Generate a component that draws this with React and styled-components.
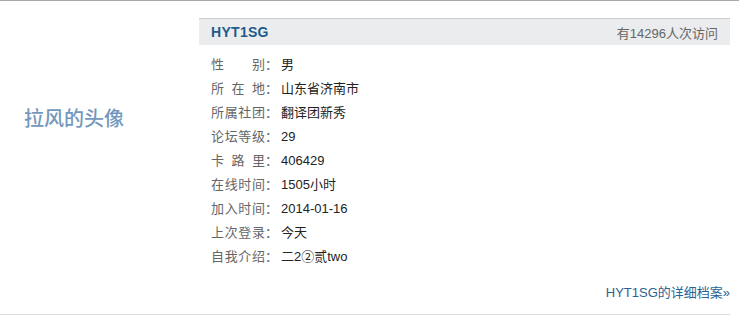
import React from 'react';
import styled, { createGlobalStyle } from 'styled-components';

const GlobalStyle = createGlobalStyle`
  body {
    margin: 0;
    background: #fff;
    font-family: "Liberation Sans", "Noto Sans CJK SC", Arial, sans-serif;
  }
`

const Page = styled.div`
  border-top: 1px solid #a9a9a9;
  width: 739px;
`

const Main = styled.div`
  display: flex;
  width: 730px;
  border-bottom: 1px solid #dcdcdc;
`

const AvatarCol = styled.div`
  width: 199px;
  flex-shrink: 0;
  padding: 103px 0 0 24px;
  box-sizing: border-box;
`

const AvatarAlt = styled.span`
  font-family: "Noto Sans CJK SC", serif;
  font-size: 20px;
  line-height: 28px;
  font-weight: 500;
  color: #7398bd;
  letter-spacing: 0;
`

const InfoCol = styled.div`
  flex: 1;
  margin-top: 17px;
`

const Header = styled.div`
  display: flex;
  justify-content: space-between;
  align-items: center;
  height: 26px;
  padding: 0 12px;
  background: #eaeced;
  border-top: 1px solid #c9cbcc;
`

const UserName = styled.span`
  font-size: 14px;
  font-weight: 700;
  color: #1f5c8c;
  letter-spacing: 0.3px;
`

const Visits = styled.span`
  font-size: 13px;
  color: #666;
`

const List = styled.div`
  padding: 8px 12px 0;
`

const Row = styled.div`
  display: flex;
  height: 24px;
  line-height: 24px;
  font-size: 13px;
`

const Label = styled.span`
  display: inline-block;
  width: 54px;
  color: #666;
  text-align: justify;
  text-align-last: justify;
  white-space: nowrap;
`

const Colon = styled.span`
  width: 16px;
  color: #666;
`

const Value = styled.span`
  color: #222;
`

const Footer = styled.div`
  display: flex;
  justify-content: flex-end;
  margin-top: 12px;
  padding-bottom: 9px;
  line-height: 24px;
`

const MoreLink = styled.a`
  font-size: 13px;
  color: #2a6394;
  text-decoration: none;
`

const rows = [
  ['性 别', '男'],
  ['所 在 地', '山东省济南市'],
  ['所属社团', '翻译团新秀'],
  ['论坛等级', '29'],
  ['卡 路 里', '406429'],
  ['在线时间', '1505小时'],
  ['加入时间', '2014-01-16'],
  ['上次登录', '今天'],
  ['自我介绍', '二2②贰two'],
]

export default function App() {
  return (
    <Page>
      <GlobalStyle />
      <Main>
        <AvatarCol>
          <AvatarAlt>拉风的头像</AvatarAlt>
        </AvatarCol>
        <InfoCol>
          <Header>
            <UserName>HYT1SG</UserName>
            <Visits>有14296人次访问</Visits>
          </Header>
          <List>
            {rows.map(([label, value]) => (
              <Row key={label}>
                <Label>{label}</Label>
                <Colon>：</Colon>
                <Value>{value}</Value>
              </Row>
            ))}
          </List>
          <Footer>
            <MoreLink href="#">HYT1SG的详细档案»</MoreLink>
          </Footer>
        </InfoCol>
      </Main>
    </Page>
  )
}
